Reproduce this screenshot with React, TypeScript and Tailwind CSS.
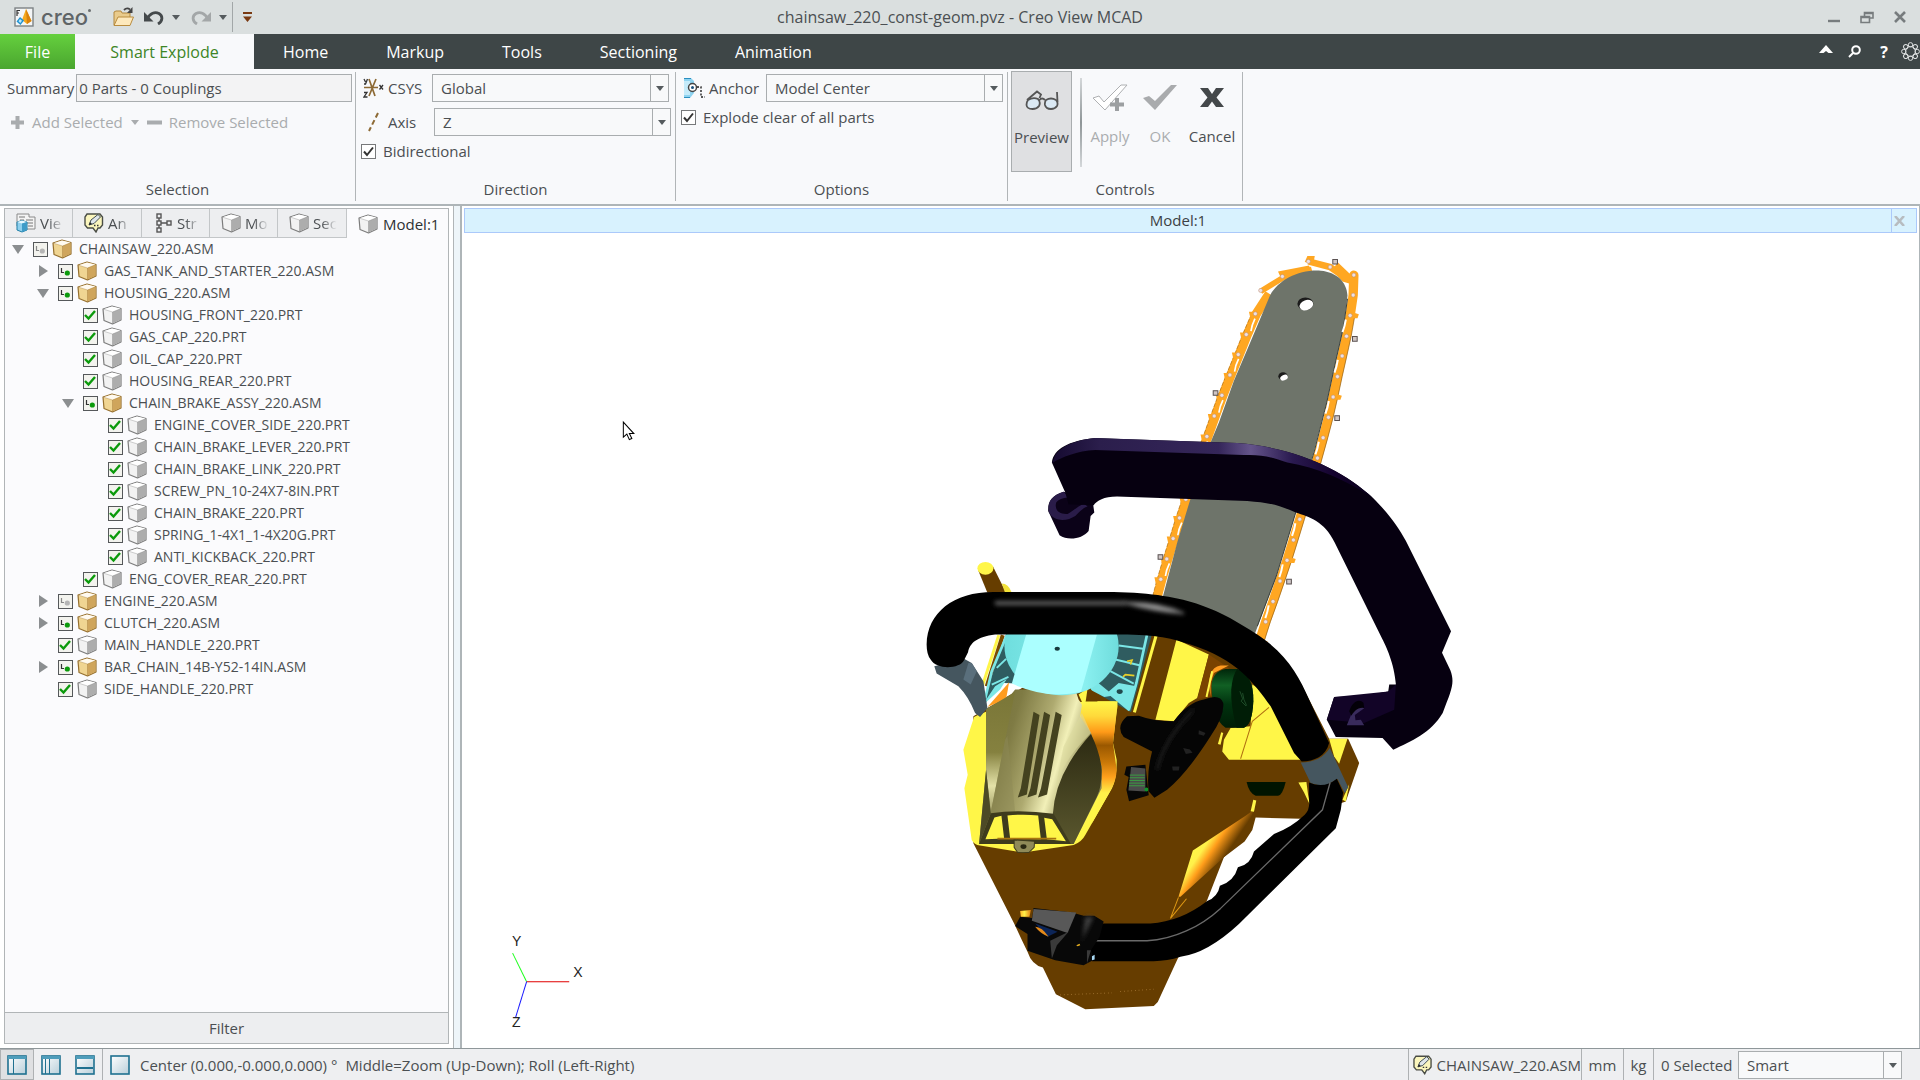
import { useState, type ReactNode } from "react";

/* ---------- shared controls ---------- */

function Caret({ className = "text-[#555b5e]" }: { className?: string }) {
  return (
    <svg width="8" height="5" viewBox="0 0 8 5" className={className} aria-hidden="true">
      <path d="M0 0H8L4 5Z" fill="currentColor" />
    </svg>
  );
}

function Combo({ id, value, options }: { id: string; value: string; options: string[] }) {
  return (
    <div className="relative h-7 w-full border border-[#a9adaf] bg-[#f8f9fa]">
      <select
        id={id}
        defaultValue={value}
        aria-label={id}
        className="h-full w-full appearance-none bg-transparent pr-6 pl-2 outline-none"
      >
        {options.map((o) => (
          <option key={o}>{o}</option>
        ))}
      </select>
      <span className="pointer-events-none absolute inset-y-0 right-0 flex w-[18px] items-center justify-center border-l border-[#a9adaf]">
        <Caret />
      </span>
    </div>
  );
}

function Check({ id, label }: { id: string; label: string }) {
  return (
    <div className="flex items-center gap-[7px]">
      <span className="grid size-[15px] place-items-center">
        <input
          id={id}
          type="checkbox"
          defaultChecked
          className="peer col-start-1 row-start-1 size-[15px] appearance-none border border-[#77797b] bg-white"
        />
        <svg
          viewBox="0 0 11 11"
          className="pointer-events-none invisible col-start-1 row-start-1 size-[11px] peer-checked:visible"
          aria-hidden="true"
        >
          <path d="M1 5.5L4 9L10 1.5" fill="none" stroke="#333" strokeWidth="2" />
        </svg>
      </span>
      <label htmlFor={id}>{label}</label>
    </div>
  );
}

/* ---------- icons ---------- */

function Cube({ gold = false }: { gold?: boolean }) {
  const c = gold
    ? { top: "#fffaf0", left: "#f0d592", right: "#cfa55c", line: "#96702f" }
    : { top: "#ffffff", left: "#f2f2f2", right: "#adadad", line: "#7c7c7c" };
  return (
    <svg width="20" height="20" viewBox="0 0 20 20" aria-hidden="true">
      <path d="M1 4L10 1L19 3.500V15L10.500 19L2 15.500Z" fill={c.left} stroke={c.line} strokeWidth="1.200" strokeLinejoin="round" />
      <path d="M1.500 4.200L10 1.500L18.500 3.600L10.500 7Z" fill={c.top} />
      <path d="M10.500 7L18.500 3.800V14.700L10.500 18.500Z" fill={c.right} />
      <path d="M1 4L10.500 7L19 3.500M10.500 7V19" fill="none" stroke={c.line} strokeWidth="0.600" opacity=".6" />
    </svg>
  );
}

function NoteIcon() {
  return (
    <svg width="20" height="20" viewBox="0 0 20 20" aria-hidden="true">
      <path d="M3 1H16L18.500 4V12L16 15H14L12 19L9 15H3.500L1 12V4Z" fill="#fbf6bd" stroke="#4a4d46" strokeWidth="1.400" />
      <path d="M5 12L7 7L14 1.500L16.500 4L10 10.500Z" fill="#dfe6ea" stroke="#3f4b52" />
      <path d="M5 12L6 9L8 11Z" fill="#222" />
      <path d="M10 12.500h1.500M13 12.500h1.500" stroke="#333" strokeWidth="1.400" />
    </svg>
  );
}

function ViewsIcon() {
  return (
    <svg width="20" height="20" viewBox="0 0 20 20" aria-hidden="true">
      <path d="M1 1H13V4H19V16H8V13H1Z" fill="#f3f3f3" stroke="#8a8a8a" />
      <path d="M3 4H9M10 7H17M10 10H17M12 13H17M4 7H8" stroke="#777" />
      <path d="M1 9L6 7.500L11 9V17L6 19L1 17Z" fill="#8fd0ee" stroke="#1f7fa8" />
      <path d="M1 9L6 10.500L11 9L6 7.500Z" fill="#e8f8ff" />
      <path d="M6 10.500L11 9V17L6 19Z" fill="#3f9cc8" />
    </svg>
  );
}

function StructureIcon() {
  return (
    <svg width="20" height="20" viewBox="0 0 20 20" fill="none" stroke="#555" strokeWidth="1.400" aria-hidden="true">
      <rect x="4" y="1" width="4" height="4" />
      <rect x="4" y="8" width="4" height="4" />
      <rect x="4" y="15" width="4" height="4" />
      <rect x="14" y="8" width="4" height="4" />
      <path d="M6 5V8M6 12V15M8 10H14" />
    </svg>
  );
}

function AppIcon() {
  return (
    <svg width="20" height="20" viewBox="0 0 20 20" aria-hidden="true">
      <rect x="1" y="1" width="18" height="18" fill="#f4f6f7" stroke="#7d8284" strokeWidth="1.400" />
      <path d="M3 3V9M3 3.500H6M3 6H5" stroke="#333" strokeWidth="1.200" />
      <path d="M12 2L17.500 14L13 17L8 13Z" fill="#f5a81c" />
      <path d="M12 2L17.500 14L13 17Z" fill="#d9820c" />
      <path d="M6 10L10 13.500L6.500 18L2.500 14.500Z" fill="#1f93d1" />
      <path d="M6 12L8 13.800L6.300 16L4.500 14.300Z" fill="#bfe6f8" />
    </svg>
  );
}

function FolderIcon() {
  return (
    <svg width="22" height="20" viewBox="0 0 22 20" aria-hidden="true">
      <path d="M1 18V5L3 4H8L9 6H17V10" fill="#e9cb8c" stroke="#b3883f" />
      <path d="M1 18.500L5 10H20.500L17 18.500Z" fill="#fde9bd" stroke="#b98c3e" />
      <path d="M11 3Q14 0 17 2.500" fill="none" stroke="#444" strokeWidth="1.800" />
      <path d="M19.500 0V6H14Z" fill="#444" />
    </svg>
  );
}

function UndoIcon({ flip = false }: { flip?: boolean }) {
  return (
    <svg width="20" height="16" viewBox="0 0 20 16" className={flip ? "-scale-x-100 text-[#a3a7a8]" : "text-[#44494b]"} aria-hidden="true">
      <path d="M3 10C6 4 11 2.500 15 4.500C19 7 19 12 14 15" fill="none" stroke="currentColor" strokeWidth="2.800" />
      <path d="M0 3V12.500H9.500Z" fill="currentColor" />
    </svg>
  );
}

function CsysIcon() {
  return (
    <svg width="21" height="20" viewBox="0 0 21 20" fill="none" aria-hidden="true">
      <path d="M1 9.500H15M6 1L12 18M13 1L6 18" stroke="#8d6a35" strokeWidth="1.700" />
      <path d="M1 1L2.500 4M4.500 1L2.500 6H1M16.500 7L20 11.500M20 7L16.500 11.500M1 14.500H4L1 19H4.500" stroke="#333" strokeWidth="1.300" />
    </svg>
  );
}

function AnchorIcon() {
  return (
    <svg width="21" height="20" viewBox="0 0 21 20" fill="none" aria-hidden="true">
      <path d="M0 0H7L10 3V15L6 20H0Z" fill="#8ed3f0" />
      <path d="M0 3H6V17H0Z" fill="#c5ebfa" />
      <path d="M0 .5H7M0 19.500H6" stroke="#2b8fc0" />
      <circle cx="8.500" cy="9.500" r="4" fill="#fff" stroke="#444" strokeWidth="1.500" />
      <circle cx="8.500" cy="9.500" r="1.500" fill="#18507c" />
      <path d="M13 9H17V19H21" stroke="#222" strokeWidth="1.400" strokeDasharray="2 1.500" />
    </svg>
  );
}

function LayoutIcon({ kind }: { kind: "left" | "split" | "bottom" | "full" }) {
  return (
    <svg width="20" height="20" viewBox="0 0 20 20" aria-hidden="true">
      <defs>
        <linearGradient id={"lay-" + kind} x1="0" y1="0" x2="1" y2="1">
          <stop offset="0" stopColor="#ffffff" />
          <stop offset="1" stopColor="#b9cfda" />
        </linearGradient>
      </defs>
      <rect x="1" y="1" width="18" height="18" fill={"url(#lay-" + kind + ")"} stroke="#1f7190" strokeWidth="1.600" />
      {kind !== "full" && <rect x="1" y="1" width="18" height="3" fill="#4e9dbb" />}
      {kind === "left" && <path d="M6.500 4V19" stroke="#1f7190" />}
      {kind === "split" && <path d="M4.500 4V19M8.500 4V19" stroke="#1f7190" />}
      {kind === "bottom" && <path d="M2 13H18" stroke="#1f7190" strokeWidth="2" />}
    </svg>
  );
}

/* ---------- title bar and tabs ---------- */

function TitleBar() {
  return (
    <header className="grid h-[34px] grid-cols-[1fr_auto_1fr] items-center bg-[#dadfdf]">
      <div className="flex h-full items-center pl-3.5">
        <AppIcon />
        <span className="relative ml-[7px] w-[50px] font-['Inter'] text-[22px] leading-6 font-medium text-[#5f6567]">
          creo
          <span className="absolute top-1 right-0 size-[3px] rounded-full bg-[#6b7072]" />
        </span>
        <button aria-label="Open" className="ml-[22px]"><FolderIcon /></button>
        <button aria-label="Undo" className="ml-[9px]"><UndoIcon /></button>
        <button aria-label="Undo list" className="ml-2"><Caret /></button>
        <button aria-label="Redo" className="ml-[11px]"><UndoIcon flip /></button>
        <button aria-label="Redo list" className="ml-2"><Caret /></button>
        <span className="ml-[5px] h-[30px] w-px bg-[#a2a7a8]" />
        <button aria-label="Customize toolbar" className="ml-2.5">
          <svg width="9" height="10" viewBox="0 0 9 10" fill="#7a3a12" aria-hidden="true">
            <path d="M0 0H9V2H0ZM0 4.500H9L4.500 10Z" />
          </svg>
        </button>
      </div>
      <h1 className="text-base">chainsaw_220_const-geom.pvz - Creo View MCAD</h1>
      <div className="flex items-center justify-end gap-5 pr-3.5 text-[#777c7e]">
        <button aria-label="Minimize">
          <svg width="12" height="14" viewBox="0 0 12 14"><path d="M0 11H12" stroke="currentColor" strokeWidth="2.400" /></svg>
        </button>
        <button aria-label="Restore">
          <svg width="14" height="13" viewBox="0 0 14 13" fill="none" stroke="currentColor" strokeWidth="1.600">
            <path d="M4.500 5V1.500H13V7H9.500M1 5.500H9.500V11.500H1ZM1 6.500H9.500M4.500 2.500H13" />
          </svg>
        </button>
        <button aria-label="Close">
          <svg width="12" height="12" viewBox="0 0 12 12"><path d="M1 1L11 11M11 1L1 11" stroke="currentColor" strokeWidth="2.600" /></svg>
        </button>
      </div>
    </header>
  );
}

const tabs = ["Home", "Markup", "Tools", "Sectioning", "Animation"];

function TabBar() {
  return (
    <nav className="flex h-[35px] items-stretch bg-[#3e4647] text-base text-white">
      <button className="w-[75px] bg-linear-to-b from-[#65d03e] to-[#4aa62f]">File</button>
      <button className="w-[179px] bg-[#f8f9fb] text-[#3d8526]">Smart Explode</button>
      {tabs.map((t) => (
        <button key={t} className="px-[29px]">{t}</button>
      ))}
      <div className="ml-auto flex items-center">
        <button aria-label="Collapse ribbon" className="mr-[15px]">
          <svg width="14" height="14" viewBox="0 0 14 14"><path d="M0 8L7 0L14 8H9.500L7 6L4.500 8Z" fill="#fff" /></svg>
        </button>
        <button aria-label="Search" className="mr-[18px]">
          <svg width="13" height="13" viewBox="0 0 13 13" fill="none" stroke="#fff" strokeWidth="2">
            <circle cx="8" cy="5" r="3.800" />
            <path d="M5 8L1 12" />
          </svg>
        </button>
        <button aria-label="Help" className="mr-3 w-2.5 font-bold">?</button>
        <button aria-label="Community">
          <svg width="19" height="19" viewBox="0 0 19 19" fill="none" stroke="#dfe2e2">
            {[0, 45, 90, 135, 180, 225, 270, 315].map((a) => (
              <circle key={a} cx="9.500" cy="2.800" r="2.200" transform={"rotate(" + a + " 9.500 9.500)"} />
            ))}
            <circle cx="9.500" cy="9.500" r="5" />
          </svg>
        </button>
      </div>
    </nav>
  );
}

/* ---------- ribbon ---------- */

function Group({ title, className, inner = "", children }: { title: string; className: string; inner?: string; children: ReactNode }) {
  return (
    <section className={"my-[3px] flex flex-col border-r border-[#b1b5b7] " + className}>
      <div className={"h-[105px] " + inner}>{children}</div>
      <h2 className="text-center leading-6">{title}</h2>
    </section>
  );
}

function Ribbon() {
  return (
    <div className="flex h-[137px] border-b-2 border-[#aeb5b8] bg-[#f8f9fb]">
      <Group title="Selection" className="w-[356px]">
        <div className="flex items-center gap-0.5 pt-0.5 pr-[3px] pl-[7px]">
          <label htmlFor="summary">Summary</label>
          <input
            id="summary"
            readOnly
            value="0 Parts - 0 Couplings"
            className="h-7 min-w-0 flex-1 border border-[#a9adaf] bg-[#f3f3f4] px-0.5 outline-none"
          />
        </div>
        <div className="flex h-10 items-center pl-2.5 text-[#a9acae]">
          <button disabled className="flex items-center gap-[7px]">
            <svg width="15" height="15" viewBox="0 0 15 15"><path d="M7.500 1V14M1 7.500H14" stroke="currentColor" strokeWidth="4" /></svg>
            Add Selected
          </button>
          <button disabled aria-label="Add options" className="mx-2"><Caret className="text-[#a9acae]" /></button>
          <button disabled className="flex items-center gap-[7px]">
            <svg width="15" height="15" viewBox="0 0 15 15"><path d="M0 7.500H15" stroke="currentColor" strokeWidth="4" /></svg>
            Remove Selected
          </button>
        </div>
      </Group>

      <Group title="Direction" className="w-80" inner="pl-[7px]">
        <div className="grid grid-cols-[21px_40px_237px] items-center gap-x-1 pt-0.5">
          <CsysIcon />
          <label htmlFor="CSYS">CSYS</label>
          <Combo id="CSYS" value="Global" options={["Global", "Local"]} />
        </div>
        <div className="grid grid-cols-[21px_42px_237px] items-center gap-x-1 pt-1.5">
          <svg width="21" height="20" viewBox="0 0 21 20"><path d="M15 1L6 19" stroke="#8d6a35" strokeWidth="2" strokeDasharray="5 3" /></svg>
          <label htmlFor="Axis">Axis</label>
          <Combo id="Axis" value="Z" options={["X", "Y", "Z"]} />
        </div>
        <div className="-ml-0.5 pt-[5px]"><Check id="bidirectional" label="Bidirectional" /></div>
      </Group>

      <Group title="Options" className="w-[332px]" inner="pl-2">
        <div className="grid grid-cols-[21px_53px_237px] items-center gap-x-1 pt-0.5">
          <AnchorIcon />
          <label htmlFor="Anchor">Anchor</label>
          <Combo id="Anchor" value="Model Center" options={["Model Center", "Selected"]} />
        </div>
        <div className="-ml-[3px] pt-[5px]"><Check id="clear" label="Explode clear of all parts" /></div>
      </Group>

      <Group title="Controls" className="w-[235px]">
        <div className="flex pl-[3px]">
          <button className="-mt-px flex h-[101px] w-[61px] flex-col items-center gap-[17px] border border-[#a9adaf] bg-[#dfe0e2] pt-[18px]">
            <svg width="34" height="20" viewBox="0 0 34 20" fill="none" stroke="#555" strokeWidth="1.800" aria-hidden="true">
              <path d="M2 10L12 1.500L16 4.500L14.500 8M32 2L32.500 12M20 10Q17 7 14.500 10" />
              <path d="M3 10Q8 7 13 9Q16 12 14 16Q12 19 7.500 19Q2 19 1.500 15Q1.500 12 3 10ZM21 10Q26 7 31 10Q33.500 13 32 16Q30 19 26 19Q21 19 20 15Q19.500 12 21 10Z" fill="#dbe9f4" />
            </svg>
            Preview
          </button>
          <span className="mt-1.5 ml-2 h-[89px] w-0.5 bg-linear-to-b from-[#d5d8da] via-[#8f9698] to-[#d5d8da]" />
          <button disabled className="ml-2 flex w-10 flex-col items-center gap-3 pt-3 text-[#aaadaf]">
            <svg width="36" height="30" viewBox="0 0 36 30" aria-hidden="true">
              <path d="M1 14L7 12L12 18L29 1H35L13 26Z" fill="#fff" stroke="#aeb0b2" />
              <path d="M25 14V27M18 20.500H32" stroke="#9c9fa1" strokeWidth="4" />
            </svg>
            Apply
          </button>
          <button disabled className="ml-2.5 flex w-10 flex-col items-center gap-3 pt-3 text-[#aaadaf]">
            <svg width="36" height="30" viewBox="0 0 36 30" aria-hidden="true">
              <path d="M1 14L7 12L13 17L29 1H35L13 26Z" fill="#a9abad" />
            </svg>
            OK
          </button>
          <button className="ml-2 flex w-12 flex-col items-center gap-3 pt-3">
            <svg width="24" height="30" viewBox="0 0 24 30" aria-hidden="true">
              <path d="M0 4H8L12 10L16 4H24L16.500 13.500L24 23H16L12 17.500L8 23H0L7.500 13.500Z" fill="#44484a" />
            </svg>
            Cancel
          </button>
        </div>
      </Group>
    </div>
  );
}

/* ---------- model tree ---------- */

type State = "on" | "some" | "dim";
type Node = { name: string; level: number; state: State; open?: boolean };

const nodes: Node[] = [
  { name: "CHAINSAW_220.ASM", level: 0, state: "dim", open: true },
  { name: "GAS_TANK_AND_STARTER_220.ASM", level: 1, state: "some", open: false },
  { name: "HOUSING_220.ASM", level: 1, state: "some", open: true },
  { name: "HOUSING_FRONT_220.PRT", level: 2, state: "on" },
  { name: "GAS_CAP_220.PRT", level: 2, state: "on" },
  { name: "OIL_CAP_220.PRT", level: 2, state: "on" },
  { name: "HOUSING_REAR_220.PRT", level: 2, state: "on" },
  { name: "CHAIN_BRAKE_ASSY_220.ASM", level: 2, state: "some", open: true },
  { name: "ENGINE_COVER_SIDE_220.PRT", level: 3, state: "on" },
  { name: "CHAIN_BRAKE_LEVER_220.PRT", level: 3, state: "on" },
  { name: "CHAIN_BRAKE_LINK_220.PRT", level: 3, state: "on" },
  { name: "SCREW_PN_10-24X7-8IN.PRT", level: 3, state: "on" },
  { name: "CHAIN_BRAKE_220.PRT", level: 3, state: "on" },
  { name: "SPRING_1-4X1_1-4X20G.PRT", level: 3, state: "on" },
  { name: "ANTI_KICKBACK_220.PRT", level: 3, state: "on" },
  { name: "ENG_COVER_REAR_220.PRT", level: 2, state: "on" },
  { name: "ENGINE_220.ASM", level: 1, state: "dim", open: false },
  { name: "CLUTCH_220.ASM", level: 1, state: "some", open: false },
  { name: "MAIN_HANDLE_220.PRT", level: 1, state: "on" },
  { name: "BAR_CHAIN_14B-Y52-14IN.ASM", level: 1, state: "some", open: false },
  { name: "SIDE_HANDLE_220.PRT", level: 1, state: "on" },
];

const indents = ["pl-[7px]", "pl-8", "pl-[57px]", "pl-[82px]"];

function TreeRow({ node }: { node: Node }) {
  const asm = node.open !== undefined;
  return (
    <li className={"flex h-[22px] items-center " + indents[node.level]}>
      {asm ? (
        <button aria-label={"Toggle " + node.name} className="flex w-3 justify-center">
          <svg width="12" height="12" viewBox="0 0 12 12" fill="#8b8e90">
            <path d={node.open ? "M0 2H12L6 11Z" : "M2 0L11 6L2 12Z"} />
          </svg>
        </button>
      ) : (
        <span className="w-3" />
      )}
      <span className="ml-2 grid size-4 place-items-center">
        <input
          id={node.name}
          type="checkbox"
          defaultChecked={node.state === "on"}
          className="col-start-1 row-start-1 size-[15px] appearance-none border border-[#55585a] bg-[#f3f3ee]"
        />
        <svg viewBox="0 0 12 12" className="pointer-events-none col-start-1 row-start-1 size-3" aria-hidden="true">
          {node.state === "on" ? (
            <path d="M1 6L4.500 9.500L11 2" fill="none" stroke="#0b9a0b" strokeWidth="2.400" />
          ) : (
            <g>
              <path d="M2.500 3V7.500H5" fill="none" stroke={node.state === "some" ? "#333" : "#888"} strokeWidth="1.200" />
              <circle cx="8.300" cy="8" r="2.600" fill={node.state === "some" ? "#0b9a0b" : "#b5b5b5"} />
            </g>
          )}
        </svg>
      </span>
      <label htmlFor={node.name} className="ml-1 flex items-center gap-[7px] whitespace-nowrap">
        <Cube gold={asm} />
        {node.name}
      </label>
    </li>
  );
}

function SidePanel() {
  const [tab, setTab] = useState(5);
  const items: { label: string; icon: ReactNode }[] = [
    { label: "Vie", icon: <ViewsIcon /> },
    { label: "An", icon: <NoteIcon /> },
    { label: "Str", icon: <StructureIcon /> },
    { label: "Mo", icon: <Cube /> },
    { label: "Sec", icon: <Cube /> },
    { label: "Model:1", icon: <Cube /> },
  ];
  return (
    <aside className="mt-0.5 mr-1 mb-1 ml-1 flex w-[445px] flex-none flex-col border border-[#b1b5b7] bg-[#fbfbfd]">
      <div role="tablist" className="grid h-[29px] grid-cols-[68px_69px_68px_68px_69px_1fr]">
        {items.map((it, i) => (
          <button
            key={it.label}
            role="tab"
            aria-selected={tab === i}
            onClick={() => setTab(i)}
            className={
              "flex items-center border-[#c3c6c8] pl-[11px] " +
              (i === 5 ? "gap-[5px]" : "gap-1 border-r") +
              (tab === i ? " text-[#2d3133]" : " border-b bg-[#edeef0]")
            }
          >
            <span className="flex-none">{it.icon}</span>
            <span className={i === 5 ? "" : "w-7 text-left mask-linear-[90deg,black_30%,transparent_85%]"}>{it.label}</span>
          </button>
        ))}
      </div>
      <ul className="min-h-0 flex-1 overflow-hidden text-sm">
        {nodes.map((n) => (
          <TreeRow key={n.name} node={n} />
        ))}
      </ul>
      <button className="h-[31px] border-t border-[#b1b5b7] bg-[#edeef0]">Filter</button>
    </aside>
  );
}

/* ---------- 3D model ---------- */

const chainLeft = [
  [983, 38], [905, 83], [840, 125], [824, 195], [797, 257], [773, 317], [748, 378], [724, 439], [701, 501],
  [679, 562], [655, 625], [635, 688], [616, 750], [597, 806], [578, 868], [559, 929], [541, 990], [525, 1050],
];
const chainRight = [
  [1048, 55], [1119, 79], [1117, 139], [1108, 200], [1097, 262], [1084, 321], [1070, 383], [1057, 444], [1043, 505],
  [1027, 566], [1010, 627], [993, 690], [975, 750], [957, 810], [938, 872], [919, 933], [898, 995], [877, 1056],
  [855, 1117], [835, 1180],
];

function BarAndChain() {
  return (
    <g>
      <path d="M983 38L1048 55L1085 80" fill="none" stroke="#ffa722" strokeWidth="20" />
      <path d="M840 128L905 88L993 62" fill="none" stroke="#ffa722" strokeWidth="17" />
      <path d="M892 68L985 50L990 66L900 86ZM972 40L980 22H1002L998 45ZM1070 40L1110 78L1105 104L1085 98L1055 66Z" fill="#ffa722" />
      <path d={"M866 135L" + chainLeft.slice(3).map((p) => p[0] + 3 + " " + p[1]).join("L")} fill="none" stroke="#ffa722" strokeWidth="28" strokeLinejoin="round" />
      <path d={"M" + chainRight.slice(1).map((p) => p.join(" ")).join("L")} fill="none" stroke="#ffa722" strokeWidth="28" strokeLinejoin="round" strokeLinecap="round" />
      <path d={"M" + chainRight.slice(3).map((p) => p[0] + 14 + " " + p[1]).join("L")} fill="none" stroke="#8f5d14" strokeWidth="2" />
      <path d={"M" + chainLeft.slice(3).map((p) => p[0] - 11 + " " + p[1]).join("L")} fill="none" stroke="#8f5d14" strokeWidth="1.500" strokeDasharray="12 5" />
      <path
        d="M545 1050L590 880L628 755L690 580L715 520L760 395L805 290L868 140C895 92 955 62 1020 66C1068 70 1098 100 1100 140L1088 235L1064 340L1038 460L1000 605L942 800L887 980L822 1155Z"
        fill="#6e746a"
      />
      <path d="M1100 150L1088 235L1064 340L1038 460L1001 605L942 800L887 980L830 1130" fill="none" stroke="#3c413b" strokeWidth="3" />
      {chainRight.map((p, i) =>
        i > 2 && i % 2 === 1 ? (
          <path key={i} d={"M" + (p[0] - 13) + " " + (p[1] + 12) + "q-3 20 -10 38"} stroke="#fff" strokeWidth="6" fill="none" />
        ) : null,
      )}
      {chainLeft.map((p, i) =>
        i > 2 ? (
          <g key={i}>
            {i % 2 === 0 && <path d={"M" + (p[0] + 14) + " " + (p[1] - 10) + "q2 -18 12 -38"} stroke="#fff" strokeWidth="5" fill="none" />}
            <path d={"M" + (p[0] - 19) + " " + (p[1] - 6) + "h16v18h-12z"} fill="#ffa722" />
          </g>
        ) : null,
      )}
      {chainRight.map((p, i) =>
        i > 2 && i % 4 === 3 ? <path key={i} d={"M" + p[0] + " " + (p[1] - 12) + "l26 8l-4 12h-16z"} fill="#ffa722" /> : null,
      )}
      {[[1115, 263], [1062, 500], [918, 990], [698, 425], [533, 916], [1056, 32]].map((p) => (
        <path key={p[0]} d={"M" + p[0] + " " + p[1] + "h14v14h-14z"} fill="#cfc6c6" stroke="#5a5252" strokeWidth="3" />
      ))}
      {[...chainLeft, ...chainRight].map((p) => (
        <circle key={p.join()} cx={p[0]} cy={p[1]} r="6" fill="#eee0e4" stroke="#b98a6a" strokeWidth="1.500" />
      ))}
      <ellipse cx="974" cy="165" rx="24" ry="19" fill="#1b1b1b" />
      <ellipse cx="977" cy="169" rx="21" ry="15" fill="#fff" transform="rotate(-20 977 169)" />
      <ellipse cx="907" cy="382" rx="14" ry="12" fill="#1b1b1b" />
      <ellipse cx="910" cy="386" rx="12" ry="8" fill="#fff" transform="rotate(-25 910 386)" />
    </g>
  );
}

function BrakeLever() {
  return (
    <g>
      <path d="M250 728C215 740 203 755 204 785L238 858C262 874 305 870 325 845L331 800L342 790L338 762L300 742Z" fill="#0b0218" />
      <path d="M250 728C215 738 200 760 206 790C225 820 262 815 285 800C300 785 310 775 322 772L312 764C292 768 282 785 262 794C235 796 222 780 228 760C235 750 250 745 268 746Z" fill="#2a1c49" />
      <path
        d="M215 640C220 600 265 575 345 567L400 569L770 582C950 596 1090 665 1175 745C1225 795 1250 830 1275 875L1410 1145L1383 1210L1408 1262C1422 1300 1412 1320 1385 1390C1350 1450 1290 1475 1237 1500L1205 1465L1065 1462L1038 1410L1060 1342L1140 1340L1222 1326L1225 1305L1245 1305C1240 1240 1215 1190 1205 1170L1062 880C1030 815 985 803 945 790C890 765 860 760 800 755L410 742C370 742 350 755 340 768L265 765L255 730Z"
        fill="#060010"
      />
      <path d="M222 625C235 595 285 572 345 567L770 582C950 596 1090 665 1175 745C1090 690 1010 655 920 640C870 622 840 616 790 618L345 603C290 605 245 625 215 642Z" fill="url(#lever)" />
      <path d="M1060 1342L1222 1326L1245 1305L1240 1380L1150 1420L1038 1410Z" fill="#120427" />
      <path d="M1098 1427L1112 1392C1128 1372 1140 1368 1150 1376L1122 1396L1124 1412L1140 1410L1150 1427Z" fill="#392b5c" />
      <path d="M1105 1385C1115 1355 1135 1345 1148 1360L1150 1375C1130 1372 1120 1385 1112 1398Z" fill="#030008" />
    </g>
  );
}

function Housing() {
  return (
    <g>
      <path
        d="M100 280L222 520L245 570L262 605Q275 645 308 652L347 732L435 777L640 767L652 755L712 625L800 450L850 322L912 275L935 240L945 203L1080 207L1110 190L1215 155L1255 40L1222 -33L1165 -33L1080 -200L940 -320L650 -345L520 -345L100 -100Z"
        fill="#663d00"
      />
      <path d="M1165 -33H1220L1195 42L1180 20Z" fill="#fff648" />
      <path d="M1225 103L1215 155L1205 150Z" fill="#fff648" />
      <path d="M757 302L915 198L940 180L912 258L850 322L720 440H714Z" fill="url(#flank)" />
      <path d="M714 442L690 505L738 446" fill="none" stroke="#e09a14" strokeWidth="3" />
      <path d="M938 150L947 152L940 186L930 184ZM1073 98L1097 97L1102 135L1108 166L1090 128Z" fill="#fff648" />
      <path d="M918 97H1035Q1025 138 1012 138H945Q925 130 918 97Z" fill="#001400" />
      <path d="M360 734L515 728M540 724L640 717" stroke="#d3a05c" strokeWidth="2" strokeDasharray="2 9" />
    </g>
  );
}

function Engine() {
  const teeth = [[655, 318, 728, 328], [645, 360, 720, 378], [630, 395, 700, 432], [320, 335, 345, 318], [290, 385, 318, 358], [275, 435, 325, 412]];
  return (
    <g>
      {/* exhaust stub */}
      <path d="M234 92L278 80L318 160H262Z" fill="#663d00" />
      <ellipse cx="256" cy="87" rx="24" ry="19" fill="#fff648" />
      <path d="M305 132Q325 132 334 158H314Z" fill="#f2e23a" />

      {/* right deck panels */}
      <path d="M828 300L925 345L890 475L865 490L820 545L765 540Z" fill="#fff648" />
      <path d="M925 345L985 385L935 470L890 480Z" fill="#7a4300" />
      <path d="M930 470Q915 385 960 378H985L940 400L930 430Z" fill="#ff9c20" />
      <path d="M935 395L918 472" stroke="#fff648" strokeWidth="6" />
      <path d="M1055 435L1110 470L1200 660H985L965 635L970 600L990 565L1050 560Z" fill="#fff648" />
      <path d="M1105 503L1055 545L1020 657" fill="none" stroke="#b06f10" strokeWidth="3" />
      <path d="M962 578l6 2l-8 35l-8-2z" fill="#fff648" />

      {/* left rim */}
      <path d="M296 287L242 455" stroke="#fff648" strokeWidth="9" />
      <path d="M308 287L260 440" stroke="#7a4a00" strokeWidth="12" />

      {/* fan shroud */}
      <path d="M318 283H755L692 518L605 470L560 440L310 430L245 500L268 430Z" fill="#2f5c60" />
      <path d="M768 285L702 518" stroke="#fff648" strokeWidth="9" />
      <path d="M320 287L275 395L250 500M740 285L708 430L685 512" fill="none" stroke="#7be6e6" strokeWidth="8" />
      {teeth.map((t) => (
        <path key={t.join()} d={"M" + t[0] + " " + t[1] + "L" + t[2] + " " + t[3]} stroke="#7be6e6" strokeWidth="6" />
      ))}
      <path d="M668 412L675 405L702 408M680 365L695 362L690 375" fill="none" stroke="#e8cf28" strokeWidth="5" />
      <path d="M588 425L640 468L612 472L560 445ZM655 430L708 440L685 515L620 460ZM245 500L285 440L320 418L300 450Z" fill="#7be6e6" />
      <ellipse cx="658" cy="456" rx="9" ry="7" fill="#20484c" />
      <path d="M235 525L222 532L190 630L203 705L193 745L215 900Q222 914 240 917L370 938L520 915Q545 905 555 885L635 745Q650 715 649 660L638 610L652 485H545L300 500Z" fill="#fff648" />
      <path d="M535 450L570 445L592 487H540Z" fill="#663d00" />
      <path d="M535 465L562 446L556 487H545Z" fill="#fff648" />
      <path d="M262 502L327 428L318 478Z" fill="#ff9c20" />
      <path d="M540 520Q545 490 556 486H642Q655 490 650 510L638 610L649 690Q648 720 632 750L575 850L603 745L600 680L572 590L545 545Z" fill="url(#column)" />

      {/* cylinder cover */}
      <path d="M345 450H525L535 480L545 495L540 530L572 580L604 680V745L520 912H237L258 690V508L322 478Z" fill="url(#cover)" />
      <path d="M258 508L345 457L315 600L272 818L258 690Z" fill="url(#coverLeft)" />
      <path d="M322 588L315 600L272 818H345Z" fill="#8d8a55" opacity=".5" />
      <path d="M545 520L572 580Q500 650 478 710L452 820L490 620Z" fill="#dcdb9e" opacity=".6" />
      <path d="M572 583Q600 640 604 690Q605 740 590 770L520 912H495L458 822Q465 700 572 583Z" fill="url(#coverDark)" />
      {[0, 31, 65].map((d) => (
        <path key={d} d={"M" + (400 + d * 1.02) + " 516L" + (418 + d * 1.02) + " 526L" + (380 + d * 0.93) + " 764L" + (353 + d * 0.93) + " 773L" + (362 + d * 0.93) + " 745Z"} fill="#44421f" />
      ))}
      <path d="M258 690L272 820L237 912Z" fill="#4d4a26" />
      <path d="M272 820Q360 808 460 822L512 912H237Z" fill="#3e3b1d" />
      <path d="M283 833L304 828L312 896L256 898ZM322 827Q370 822 414 827L422 898L330 896ZM432 834L456 838L497 904L440 898Z" fill="#fff648" />
      <path d="M292 896H468" stroke="#a87510" strokeWidth="5" />
      <path d="M342 900L403 904L402 922L386 938L352 937L342 922Z" fill="#8f8a58" stroke="#3e3b1d" strokeWidth="3" />
      <ellipse cx="370" cy="920" rx="9" ry="7" fill="#2a2812" />

      {/* fan disc */}
      <ellipse cx="484" cy="320" rx="171" ry="147" fill="url(#disc)" />
      <path d="M378 285H590L542 457Q440 480 335 432Z" fill="#abffff" />
      <ellipse cx="471" cy="328" rx="8" ry="6" fill="#173a3d" />

      {/* fuel cap */}
      <path d="M933 440Q935 395 975 388H1010Q1060 405 1058 485Q1055 555 1030 564H975Q935 540 933 440Z" fill="url(#cap)" />
      <path d="M1010 388Q1060 405 1058 485Q1055 555 1030 564H1008Q990 500 992 450Q996 405 1010 388Z" fill="#001d06" />
      <path d="M1018 455l8 22l-4 8l14 14M1026 460l4 20l8 18" fill="none" stroke="#3d7a4a" strokeWidth="1.500" />

      {/* starter grip */}
      <path d="M735 675L678 680L672 705L685 712L678 750L686 784L745 766Z" fill="#070707" />
      <path d="M692 682L735 686V755L684 752Z" fill="#4b4b4b" />
      <path d="M688 706H733M688 714H733M687 722H733M686 730H733M686 738H733" stroke="#35c43f" strokeWidth="2" />
      <circle cx="738" cy="749" r="6" fill="#12912a" />
      <path d="M680 530L715 528Q760 545 820 545Q860 490 910 480Q958 460 968 490Q972 530 930 590Q860 700 800 750L762 774L745 755Q738 700 755 635L670 592Q645 560 680 530Z" fill="#050505" />
      <path d="M770 690Q790 600 880 510" fill="none" stroke="#222" strokeWidth="8" filter="url(#soft)" />
      <path d="M895 572l20 8l-5 8l-16-4ZM848 625l20 4l8 10l-20 4ZM815 680l22 0l-2 12l-18 0Z" fill="#222" />
    </g>
  );
}

function MainHandle() {
  return (
    <g>
      <path d="M103 380L192 358L215 370L250 425L262 505L240 532L225 520Q205 470 175 440L110 402Z" fill="#45565f" />
      <path d="M190 420L205 370L215 370L230 395L212 435Z" fill="#5a6f7c" />
      <path
        d="M80 315C82 220 160 158 280 158H640C870 162 960 215 1070 285C1160 345 1195 410 1225 480L1285 610C1275 650 1240 665 1203 665L1180 640L1110 500C1060 430 1010 360 870 315C800 292 760 285 640 285H285C230 292 210 310 204 338L192 362C180 388 110 392 92 360Q80 345 80 315Z"
        fill="#000"
      />
      <path d="M290 191H670" stroke="#565656" strokeWidth="14" strokeLinecap="round" filter="url(#soft)" />
      <path d="M670 190Q770 186 850 222Q770 218 670 190Z" fill="#9a9a9a" stroke="#707070" strokeWidth="6" filter="url(#soft)" />
    </g>
  );
}

function SideHandle() {
  return (
    <g>
      <path d="M1080 38Q1140 38 1167 -5L1222 112L1212 130L1190 88L1150 110L1110 100Z" fill="#45565f" />
      <path
        d="M1105 98Q1150 118 1188 87L1207 128L1200 180L1185 235L895 522Q800 610 720 620Q680 633 640 633H455L420 560L490 520H630Q720 515 800 453Q832 440 838 407Q880 395 892 352Q930 345 940 305L1000 252Q1050 235 1092 195Q1108 180 1105 150Z"
        fill="#000"
      />
      <path d="M430 572H620C700 568 780 530 840 475L1145 180L1168 98" fill="none" stroke="#6a6a6a" strokeWidth="4" />
      <path d="M280 474L395 487L430 497L462 497L490 514L478 560L452 600L462 628L430 645L345 630L262 602L262 552L225 528L240 500L276 504Z" fill="#080808" />
      <path d="M280 477L408 487L382 549L275 512Z" fill="#585858" />
      <path d="M435 500L460 500L430 560L425 580Z" fill="#3f3f3f" filter="url(#soft)" />
      <path d="M285 520L352 545L322 560Z" fill="#0c2558" />
      <path d="M285 530Q305 530 325 560Q300 550 285 530Z" fill="#e58a1a" />
      <path d="M240 483L272 480L268 500L242 500Z" fill="url(#knob)" />
      <path d="M330 572L385 545L350 585L335 625ZM440 600L452 600L440 640Z" fill="#3a3a3a" />
      <path d="M455 618l8-4v14l-8 2z" fill="#a8d8f4" />
      <path d="M408 585l10-4l2 4l-8 3z" fill="#e8b020" />
    </g>
  );
}

function Viewport() {
  return (
    <svg viewBox="463 235 1454 812" className="min-h-0 w-full flex-1" role="img" aria-label="Chainsaw model">
      <defs>
        <linearGradient id="lever" x1="0" x2="1">
          <stop offset="0" stopColor="#150a30" />
          <stop offset=".15" stopColor="#2b1e4c" />
          <stop offset=".52" stopColor="#35265a" />
          <stop offset=".62" stopColor="#64548a" />
          <stop offset=".75" stopColor="#2a1a50" />
          <stop offset=".88" stopColor="#14022e" />
          <stop offset="1" stopColor="#08001a" />
        </linearGradient>
        <linearGradient id="flank" gradientUnits="userSpaceOnUse" x1="740" y1="337" x2="810" y2="384">
          <stop offset="0" stopColor="#fff648" />
          <stop offset=".2" stopColor="#fff04a" />
          <stop offset=".5" stopColor="#ff9c1a" />
          <stop offset="1" stopColor="#663d00" />
        </linearGradient>
        <linearGradient id="knob" x1="0" x2="1">
          <stop offset="0" stopColor="#ffb52a" />
          <stop offset=".4" stopColor="#fff04a" />
          <stop offset="1" stopColor="#e07c10" />
        </linearGradient>
        <linearGradient id="disc" x1="0" x2="1">
          <stop offset="0" stopColor="#6fdede" />
          <stop offset=".7" stopColor="#8af0f0" />
          <stop offset="1" stopColor="#6fdcdc" />
        </linearGradient>
        <linearGradient id="column" x1="0" y1="0" x2="0" y2="1">
          <stop offset="0" stopColor="#fff648" />
          <stop offset=".12" stopColor="#ffd93a" />
          <stop offset=".25" stopColor="#ff9a18" />
          <stop offset=".36" stopColor="#9a5800" />
          <stop offset=".5" stopColor="#c97808" />
          <stop offset=".62" stopColor="#ffa01c" />
          <stop offset=".75" stopColor="#fff04a" />
          <stop offset="1" stopColor="#fff648" />
        </linearGradient>
        <linearGradient id="cover" x1="0" y1="0" x2=".9" y2=".35">
          <stop offset="0" stopColor="#6d6a33" />
          <stop offset=".35" stopColor="#7f7b44" />
          <stop offset=".62" stopColor="#aeaa70" />
          <stop offset=".8" stopColor="#f2f0b8" />
          <stop offset="1" stopColor="#8a8650" />
        </linearGradient>
        <linearGradient id="coverLeft" x1="0" y1="0" x2="0" y2="1">
          <stop offset="0" stopColor="#7a7638" />
          <stop offset=".5" stopColor="#85813f" />
          <stop offset=".78" stopColor="#e4e2a8" />
          <stop offset="1" stopColor="#a09c66" />
        </linearGradient>
        <linearGradient id="coverDark" x1="0" y1="0" x2="0" y2="1">
          <stop offset="0" stopColor="#2c2a12" />
          <stop offset="1" stopColor="#5a572e" />
        </linearGradient>
        <linearGradient id="cap" x1="0" y1="0" x2="0" y2="1">
          <stop offset="0" stopColor="#00260a" />
          <stop offset=".28" stopColor="#116024" />
          <stop offset=".6" stopColor="#00320e" />
          <stop offset="1" stopColor="#001d06" />
        </linearGradient>
        <filter id="soft" filterUnits="userSpaceOnUse" x="0" y="0" width="1400" height="1000">
          <feGaussianBlur stdDeviation="6" />
        </filter>
      </defs>

      <g transform="translate(980 250) scale(.33333)"><BarAndChain /></g>
      <g transform="translate(940 750) scale(.33333)"><Housing /></g>
      <g transform="translate(900 540) scale(.33333)"><Engine /></g>
      <g transform="translate(980 250) scale(.33333)"><BrakeLever /></g>
      <g transform="translate(940 750) scale(.33333)"><SideHandle /></g>
      <g transform="translate(900 540) scale(.33333)"><MainHandle /></g>

      {/* orientation triad */}
      <g fill="none" strokeWidth="1">
        <path d="M527.500 981.500L513.500 953" stroke="#1dff1d" />
        <path d="M527.500 981.500H570" stroke="#e00000" />
        <path d="M527.500 981.500L516.500 1017" stroke="#1818ff" />
      </g>
      <g fill="#222" fontSize="14" fontFamily="'Liberation Sans', Arial, sans-serif">
        <text x="513" y="946">Y</text>
        <text x="574" y="977">X</text>
        <text x="513" y="1027">Z</text>
      </g>

      {/* pointer */}
      <path d="M624 423V438L627.500 435L630 440.500L632.500 439.500L630 434.500H634.500Z" fill="#fff" stroke="#000" />
    </svg>
  );
}

/* ---------- status bar ---------- */

function StatusBar() {
  return (
    <footer className="flex h-8 items-stretch border-t border-[#8f979a] bg-[#eeeff1]">
      <button aria-label="Tree layout" aria-pressed="true" className="flex w-[34px] items-center justify-center border border-[#aeb1b3] bg-[#dfe0e2]"><LayoutIcon kind="left" /></button>
      <button aria-label="Split layout" className="flex w-[34px] items-center justify-center"><LayoutIcon kind="split" /></button>
      <button aria-label="Bottom layout" className="flex w-[34px] items-center justify-center"><LayoutIcon kind="bottom" /></button>
      <button aria-label="Full layout" className="flex w-9 items-center justify-end border-l border-[#aeb1b3] pr-2"><LayoutIcon kind="full" /></button>
      <span className="flex items-center gap-2 pl-0.5"><span>Center (0.000,-0.000,0.000) °</span><span>Middle=Zoom (Up-Down); Roll (Left-Right)</span></span>
      <div className="ml-auto flex items-stretch pr-[18px]">
        <span className="flex w-[173px] items-center gap-1 border-l border-[#aeb1b3] pl-1"><NoteIcon />CHAINSAW_220.ASM</span>
        <span className="flex w-[42px] items-center justify-center border-l border-[#aeb1b3]">mm</span>
        <span className="flex w-[30px] items-center justify-center border-l border-[#aeb1b3]">kg</span>
        <span className="flex w-[85px] items-center border-l border-[#aeb1b3] pl-[7px] whitespace-nowrap">0 Selected</span>
        <div className="w-[164px] pt-0.5"><Combo id="Filter mode" value="Smart" options={["Smart", "Part"]} /></div>
      </div>
    </footer>
  );
}

export default function App() {
  return (
    <div className="flex h-screen flex-col overflow-hidden bg-white font-['Open_Sans','Noto_Sans',sans-serif] text-[15px] leading-5 text-[#4b4f52]">
      <TitleBar />
      <TabBar />
      <Ribbon />
      <main className="flex min-h-0 flex-1">
        <SidePanel />
        <div className="w-[7px] flex-none border-l border-[#b1b5b7] bg-[#eef5f9]" />
        <section className="flex min-w-0 flex-1 flex-col border-r border-l-2 border-[#aeb5b8] pt-0.5">
          <div className="mr-0.5 ml-0.5 flex h-[25px] border border-[#abc9fa] bg-[#d8f2fe]">
            <h2 className="flex-1 text-center leading-[22px] text-[#3c4144]">Model:1</h2>
            <button aria-label="Close view" className="flex w-[25px] items-center border-l border-[#abc9fa] pl-0.5">
              <svg width="11" height="10" viewBox="0 0 11 10"><path d="M1 0L10 10M10 0L1 10" stroke="#b7bcc0" strokeWidth="2.600" /></svg>
            </button>
          </div>
          <Viewport />
        </section>
      </main>
      <StatusBar />
    </div>
  );
}
